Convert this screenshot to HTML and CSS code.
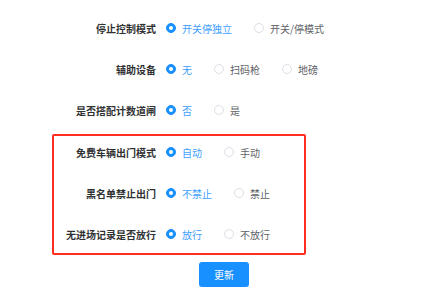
FILE: index.html
```html
<!DOCTYPE html>
<html lang="zh-CN">
<head>
    <meta charset="UTF-8">
    <meta name="viewport" content="width=device-width, initial-scale=1.0">
    <title>参数设置</title>
    <link rel="stylesheet" href="styles.css">
</head>
<body>
    <form class="settings-form">
        <div class="form-group">
            <div class="form-item">
                <label class="form-label">停止控制模式</label>
                <div class="radio-group">
                    <span class="radio checked"><span class="radio-dot"></span>开关停独立</span>
                    <span class="radio"><span class="radio-dot"></span>开关/停模式</span>
                </div>
            </div>

            <div class="form-item">
                <label class="form-label">辅助设备</label>
                <div class="radio-group">
                    <span class="radio checked"><span class="radio-dot"></span>无</span>
                    <span class="radio"><span class="radio-dot"></span>扫码枪</span>
                    <span class="radio"><span class="radio-dot"></span>地磅</span>
                </div>
            </div>

            <div class="form-item">
                <label class="form-label">是否搭配计数道闸</label>
                <div class="radio-group">
                    <span class="radio checked"><span class="radio-dot"></span>否</span>
                    <span class="radio"><span class="radio-dot"></span>是</span>
                </div>
            </div>
        </div>

        <div class="form-group highlight-box">
            <div class="form-item">
                <label class="form-label">免费车辆出门模式</label>
                <div class="radio-group">
                    <span class="radio checked"><span class="radio-dot"></span>自动</span>
                    <span class="radio"><span class="radio-dot"></span>手动</span>
                </div>
            </div>

            <div class="form-item">
                <label class="form-label">黑名单禁止出门</label>
                <div class="radio-group">
                    <span class="radio checked"><span class="radio-dot"></span>不禁止</span>
                    <span class="radio"><span class="radio-dot"></span>禁止</span>
                </div>
            </div>

            <div class="form-item">
                <label class="form-label">无进场记录是否放行</label>
                <div class="radio-group">
                    <span class="radio checked"><span class="radio-dot"></span>放行</span>
                    <span class="radio"><span class="radio-dot"></span>不放行</span>
                </div>
            </div>
        </div>

        <div class="form-actions">
            <button type="button" class="btn-primary">更新</button>
        </div>
    </form>
</body>
</html>
```

FILE: styles.css
```css
* {
    margin: 0;
    padding: 0;
    box-sizing: border-box;
}

body {
    font-family: "Noto Sans CJK SC", "Noto Sans", sans-serif;
    font-size: 10px;
    background: #ffffff;
    color: #606266;
}

.settings-form {
    padding: 18px 0 0 54px;
}

.form-item {
    display: flex;
    align-items: center;
    height: 20px;
    margin-bottom: 21px;
}

.form-item:last-child {
    margin-bottom: 0;
}

.form-label {
    width: 112px;
    padding-right: 10px;
    text-align: right;
    color: #303133;
    font-weight: 600;
    white-space: nowrap;
}

.radio-group {
    display: flex;
    align-items: center;
}

.radio {
    display: flex;
    align-items: center;
    margin-right: 22px;
    color: #606266;
    white-space: nowrap;
}

.radio-dot {
    width: 10px;
    height: 10px;
    margin-right: 6px;
    border: 1px solid #dcdfe6;
    border-radius: 50%;
    background: #ffffff;
    position: relative;
}

.radio.checked {
    color: #409eff;
}

.radio.checked .radio-dot {
    border-color: #1890ff;
    background: #1890ff;
}

.radio.checked .radio-dot::after {
    content: '';
    position: absolute;
    top: 50%;
    left: 50%;
    width: 4px;
    height: 4px;
    margin: -2px 0 0 -2px;
    border-radius: 50%;
    background: #ffffff;
}

/* red frame around the exit rules */
.highlight-box {
    width: 254px;
    margin: 14px 0 0 -2px;
    padding: 6px 0 9px;
    border: 2px solid #ff2d20;
    border-radius: 2px;
}

.form-actions {
    padding: 7px 0 0 145px;
}

.btn-primary {
    width: 50px;
    height: 25px;
    border: none;
    border-radius: 3px;
    background: #1890ff;
    color: #ffffff;
    font-family: inherit;
    font-size: 10px;
    cursor: pointer;
}
```
